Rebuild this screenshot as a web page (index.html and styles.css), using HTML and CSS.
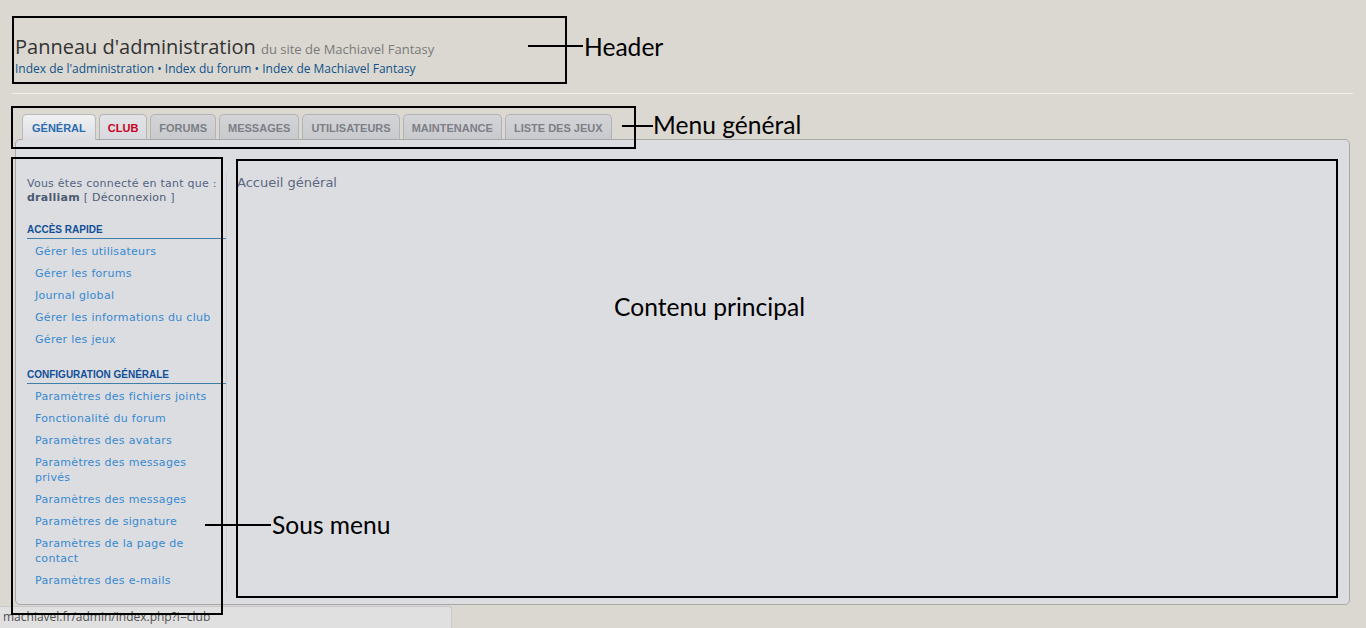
FILE: index.html
```html
<!DOCTYPE html>
<html lang="fr">
  <head>
    <meta charset="UTF-8" />
    <meta name="viewport" content="width=device-width, initial-scale=1.0" />
    <title>Panneau d'administration</title>
    <link rel="stylesheet" href="styles.css">
  </head>
  <body>
    <div class="page">
      <!-- En-tête -->
      <div class="header">
        <h1>Panneau d'administration <span class="site">du site de Machiavel Fantasy</span></h1>
        <p class="crumbs">
          <a href="#">Index de l'administration</a> &bull;
          <a href="#">Index du forum</a> &bull;
          <a href="#">Index de Machiavel Fantasy</a>
        </p>
      </div>
      <hr class="sep" />

      <!-- Menu général -->
      <ul class="tabs">
        <li class="active"><a href="#">Général</a></li>
        <li class="club"><a href="#">Club</a></li>
        <li><a href="#">Forums</a></li>
        <li><a href="#">Messages</a></li>
        <li><a href="#">Utilisateurs</a></li>
        <li><a href="#">Maintenance</a></li>
        <li><a href="#">Liste des jeux</a></li>
      </ul>

      <div class="panel">
        <!-- Sous menu -->
        <div class="sidebar">
          <p class="login">
            Vous êtes connecté en tant que :<br />
            <strong>dralliam</strong> [ <a href="#">Déconnexion</a> ]
          </p>

          <h3>Accès rapide</h3>
          <ul class="links">
            <li><a href="#">Gérer les utilisateurs</a></li>
            <li><a href="#">Gérer les forums</a></li>
            <li><a href="#">Journal global</a></li>
            <li><a href="#">Gérer les informations du club</a></li>
            <li><a href="#">Gérer les jeux</a></li>
          </ul>

          <h3>Configuration générale</h3>
          <ul class="links">
            <li><a href="#">Paramètres des fichiers joints</a></li>
            <li><a href="#">Fonctionalité du forum</a></li>
            <li><a href="#">Paramètres des avatars</a></li>
            <li><a href="#">Paramètres des messages privés</a></li>
            <li><a href="#">Paramètres des messages</a></li>
            <li><a href="#">Paramètres de signature</a></li>
            <li><a href="#">Paramètres de la page de contact</a></li>
            <li><a href="#">Paramètres des e-mails</a></li>
          </ul>
        </div>

        <!-- Contenu principal -->
        <div class="main">
          <p>Accueil général</p>
        </div>
      </div>
    </div>

    <!-- Barre d'état du navigateur -->
    <div class="status">machiavel.fr/admin/index.php?i=club</div>

    <!-- Annotations -->
    <div class="notes">
      <div class="box box-header"></div>
      <div class="line line-header"></div>
      <div class="label label-header">Header</div>

      <div class="box box-menu"></div>
      <div class="line line-menu"></div>
      <div class="label label-menu">Menu général</div>

      <div class="box box-sub"></div>
      <div class="line line-sub"></div>
      <div class="label label-sub">Sous menu</div>

      <div class="box box-main"></div>
      <div class="label label-main">Contenu principal</div>
    </div>
  </body>
</html>
```

FILE: styles.css
```css
/* Fond général */
body {
  margin: 0;
  background: #dbd8d1;
  font-family: 'DejaVu Sans', Verdana, sans-serif;
  color: #536482;
}

a {
  text-decoration: none;
}

.page {
  padding: 0 16px 0 15px;
}

/* En-tête */
.header {
  padding-top: 35px;
  font-family: 'Open Sans', sans-serif;
}

.header h1 {
  margin: 0;
  font-weight: normal;
  font-size: 20px;
  line-height: 24px;
  color: #333;
}

.header .site {
  font-size: 13px;
  color: #7a7a7a;
}

.crumbs {
  margin: 0;
  font-size: 12px;
  line-height: 16px;
  color: #105289;
}

.crumbs a {
  color: #105289;
}

.sep {
  margin: 16px -3px 0;
  height: 0;
  border: 0;
  border-top: 1px solid #efeee9;
}

/* Onglets */
.tabs {
  display: flex;
  gap: 3px;
  list-style: none;
  margin: 20px 0 0 7px;
  padding: 0;
  position: relative;
  z-index: 1;
}

.tabs li {
  height: 24px;
  border: 1px solid #b3b3b3;
  border-bottom: 0;
  border-radius: 5px 5px 0 0;
  background: linear-gradient(#d3d4d8, #c9cace);
}

.tabs li a {
  display: block;
  padding: 0 8px;
  line-height: 26px;
  font-family: 'Liberation Sans', Arial, sans-serif;
  font-weight: bold;
  font-size: 11px;
  text-transform: uppercase;
  color: #7c7f86;
}

.tabs li.club {
  background: linear-gradient(#e2e3e7, #d9dadf);
}

.tabs li.club a {
  color: #c8001e;
}

.tabs li.active {
  height: 25px;
  margin-bottom: -1px;
  border-color: #b9b9b9;
  background: linear-gradient(#f0f1f3, #dcdde1);
}

.tabs li.active a {
  padding: 0 9px;
  color: #2c6cb0;
}

/* Panneau */
.panel {
  display: flex;
  align-items: flex-start;
  border: 1px solid #a8a8a8;
  border-radius: 5px;
  background: #dcdde1;
  padding: 33px 0 13px 11px;
}

.sidebar {
  width: 199px;
  flex: none;
  padding-top: 4px;
  border-right: 1px solid #cdd0d5;
}

.login {
  margin: 0;
  font-size: 11px;
  line-height: 14px;
  letter-spacing: 0.25px;
}

.login strong {
  color: #4b5a73;
}

.login a {
  color: #4b5a73;
}

.sidebar h3 {
  margin: 19px 0 0;
  padding-bottom: 2px;
  border-bottom: 1px solid #3f7fa8;
  font-family: 'Liberation Sans', Arial, sans-serif;
  font-size: 10px;
  line-height: 12px;
  font-weight: bold;
  text-transform: uppercase;
  color: #115098;
}

.links {
  list-style: none;
  margin: 1px 0 0;
  padding: 0 12px 0 8px;
}

.links li {
  padding: 4px 0 3px;
  font-size: 11px;
  line-height: 15px;
  letter-spacing: 0.3px;
}

.links a {
  color: #3689d0;
}

.main {
  flex: 1;
  margin-left: 10px;
  padding-top: 2px;
}

.main p {
  margin: 0;
  font-size: 13px;
  line-height: 16px;
  color: #5c6780;
}

/* Barre d'état */
.status {
  position: absolute;
  left: 0;
  top: 606px;
  width: 452px;
  height: 22px;
  box-sizing: border-box;
  padding: 2px 0 0 3px;
  background: #e0e0e0;
  border: 1px solid #c8c8c8;
  border-left: 0;
  border-bottom: 0;
  border-radius: 0 3px 0 0;
  font-family: 'Open Sans', sans-serif;
  font-size: 12px;
  line-height: 16px;
  color: #505050;
  overflow: hidden;
}

/* Annotations */
.notes {
  position: absolute;
  left: 0;
  top: 0;
  width: 100%;
  height: 100%;
  pointer-events: none;
}

.box {
  position: absolute;
  box-sizing: border-box;
  border: 2px solid #000;
}

.box-header { left: 12px; top: 16px; width: 555px; height: 68px; }
.box-menu { left: 11px; top: 106px; width: 625px; height: 43px; }
.box-sub { left: 11px; top: 157px; width: 212px; height: 458px; }
.box-main { left: 236px; top: 159px; width: 1102px; height: 439px; }

.line {
  position: absolute;
  height: 2px;
  background: #000;
}

.line-header { left: 528px; top: 45px; width: 55px; }
.line-menu { left: 622px; top: 125px; width: 31px; }
.line-sub { left: 205px; top: 524px; width: 66px; }

.label {
  position: absolute;
  font-family: Lato, 'Open Sans', sans-serif;
  font-size: 24.6px;
  line-height: 30px;
  color: #000;
  white-space: nowrap;
}

.label-header { left: 584px; top: 32px; }
.label-menu { left: 653px; top: 110px; }
.label-sub { left: 272px; top: 510px; }
.label-main { left: 614px; top: 292px; }
```
